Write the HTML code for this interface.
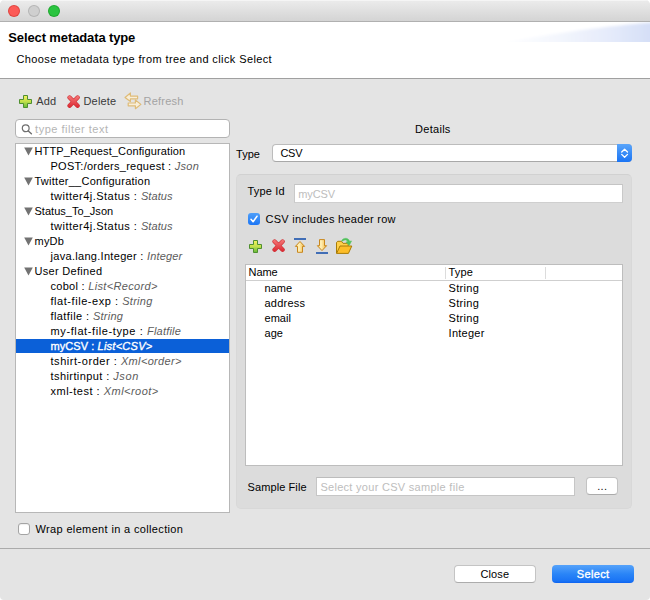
<!DOCTYPE html>
<html><head><meta charset="utf-8">
<style>
*{box-sizing:border-box;margin:0;padding:0}
html,body{width:650px;height:600px;overflow:hidden;background:#fff}
body{font-family:"Liberation Sans","DejaVu Sans",sans-serif;font-size:11px;color:#000;position:relative}
.abs{position:absolute}
#win{position:absolute;left:0;top:0;width:650px;height:600px;background:#e4e4e4;border-radius:5px 5px 4px 4px;overflow:hidden}
#titlebar{left:0;top:0;width:650px;height:22px;background:linear-gradient(#ececec,#d4d4d4);border-bottom:1px solid #b0b0b0;box-shadow:inset 0 1px 0 #f5f5f5}
.tl{position:absolute;top:5px;width:12px;height:12px;border-radius:50%}
#hdr{left:0;top:22px;width:650px;height:56px;background:#fff}
#hdrline{left:0;top:78px;width:650px;height:1px;background:#a0a0a0}
.t{position:absolute;white-space:nowrap;line-height:15px;height:15px}
i{color:#5c5c5c}
.sel i{color:#fff}
.sel,.w{-webkit-text-stroke:0.35px #fff}
.field{position:absolute;background:#fff;border:1px solid #b9b9b9}
</style></head><body>
<div id="win">
<div id="titlebar" class="abs">
 <div class="tl" style="left:8px;background:#fc5b57;border:1px solid rgba(215,60,55,.75)"></div>
 <div class="tl" style="left:28px;background:#cfcfcf;border:1px solid rgba(170,170,170,.7)"></div>
 <div class="tl" style="left:48px;background:#2bc440;border:1px solid rgba(25,160,40,.75)"></div>
</div>
<div id="hdr" class="abs">
 <svg class="abs" style="right:0;top:0;overflow:hidden" width="300" height="20" viewBox="0 0 300 20"><defs><linearGradient id="hg" gradientUnits="userSpaceOnUse" x1="150" x2="300" y1="0" y2="0"><stop offset="0" stop-color="#ffffff"/><stop offset=".4" stop-color="#f3f6fd"/><stop offset=".75" stop-color="#e4eafa"/><stop offset="1" stop-color="#d5dff7"/></linearGradient><filter id="hb" x="-10%" y="-50%" width="120%" height="200%"><feGaussianBlur stdDeviation="1.8"/></filter></defs><path d="M150 21 C 225 8, 270 2.5, 310 0 L310 40 L150 40 Z" fill="url(#hg)" filter="url(#hb)"/></svg>
</div>
<div id="hdrline" class="abs"></div>

<!-- toolbar icons -->
<svg class="abs" style="left:19px;top:95px" width="13" height="13" viewBox="0 0 13 13"><defs><linearGradient id="pg" x1="0" y1="0" x2="0" y2="1"><stop offset="0.05" stop-color="#f2f05c"/><stop offset=".5" stop-color="#c3e04c"/><stop offset="1" stop-color="#62b93a"/></linearGradient></defs><path id="plusp" d="M4.5 .5h4v4h4v4h-4v4h-4v-4h-4v-4h4z" fill="url(#pg)" stroke="#4f8f30" stroke-width="1" stroke-linejoin="round"/></svg>
<svg class="abs" style="left:67px;top:94.5px" width="13.2" height="13.6" viewBox="0 0 13.2 13.6"><defs><linearGradient id="xg" gradientUnits="userSpaceOnUse" x1="0" y1="0" x2="0" y2="13.6"><stop offset="0.1" stop-color="#f47474"/><stop offset="1" stop-color="#d8202c"/></linearGradient></defs><g id="xp"><path d="M2.6 2.5 L10.6 10.7 M10.6 2.5 L2.6 10.7" fill="none" stroke="#cf3136" stroke-width="4.4" stroke-linecap="round"/><path d="M2.6 2.5 L10.6 10.7 M10.6 2.5 L2.6 10.7" fill="none" stroke="url(#xg)" stroke-width="3.2" stroke-linecap="round"/></g></svg>
<svg class="abs" style="left:124px;top:92px" width="18" height="18" viewBox="0 0 18 18"><g fill="#f8eed9" stroke="#dfbc78" stroke-width="1.2" stroke-linejoin="round"><path d="M1 5.5 L6.4 1 L6.4 4.1 L13.6 4.1 L13.6 6.8 L6.4 6.8 L6.4 9.6 Z"/><path d="M16.9 12.4 L11.4 8 L11.4 11 L4.2 11 L4.2 13.8 L11.4 13.8 L11.4 16.7 Z"/></g></svg>

<!-- filter -->
<div class="field" style="left:15px;top:119px;width:215px;height:19px;border-color:#b3b3b3;border-radius:4px"></div>
<svg class="abs" style="left:20px;top:122px" width="14" height="14" viewBox="0 0 14 14"><circle cx="5.7" cy="6.3" r="3.4" fill="none" stroke="#6e6e6e" stroke-width="1.2"/><path d="M8.3 9 L11.4 11.8" stroke="#6e6e6e" stroke-width="1.4" stroke-linecap="round"/></svg>

<!-- tree -->
<div class="field" style="left:15px;top:143px;width:215px;height:370px;border-color:#b7b7b7"></div>
<div class="abs" style="left:16px;top:339px;width:213px;height:14px;background:#0b60d8"></div>
<svg class="abs" style="left:24px;top:146.9px" width="9" height="9" viewBox="0 0 9 9"><path d="M0.2 0.6 L8.8 0.6 L4.5 8.4 Z" fill="#727272"/></svg>
<svg class="abs" style="left:24px;top:176.9px" width="9" height="9" viewBox="0 0 9 9"><path d="M0.2 0.6 L8.8 0.6 L4.5 8.4 Z" fill="#727272"/></svg>
<svg class="abs" style="left:24px;top:206.9px" width="9" height="9" viewBox="0 0 9 9"><path d="M0.2 0.6 L8.8 0.6 L4.5 8.4 Z" fill="#727272"/></svg>
<svg class="abs" style="left:24px;top:236.9px" width="9" height="9" viewBox="0 0 9 9"><path d="M0.2 0.6 L8.8 0.6 L4.5 8.4 Z" fill="#727272"/></svg>
<svg class="abs" style="left:24px;top:266.9px" width="9" height="9" viewBox="0 0 9 9"><path d="M0.2 0.6 L8.8 0.6 L4.5 8.4 Z" fill="#727272"/></svg>

<!-- wrap checkbox -->
<div class="abs" style="left:18px;top:523px;width:12px;height:12px;background:#fff;border:1px solid #a4a4a4;border-radius:3px;box-shadow:inset 0 .5px 1px rgba(0,0,0,.12)"></div>

<!-- combo -->
<div class="abs" style="left:272px;top:144px;width:360px;height:18px;background:#fff;border:1px solid #bcbcbc;border-bottom-color:#a8a8a8;border-radius:4px"></div>
<div class="abs" style="left:617px;top:144px;width:15px;height:18px;background:linear-gradient(#5aa5fa,#1a74f4);border-radius:0 4px 4px 0"></div>
<svg class="abs" style="left:617px;top:144px" width="15" height="18" viewBox="0 0 15 18"><path d="M4.7 8 L7.6 5.2 L10.5 8 M4.7 10.4 L7.6 13.2 L10.5 10.4" fill="none" stroke="#fff" stroke-width="1.3" stroke-linecap="round" stroke-linejoin="round"/></svg>

<!-- group -->
<div class="abs" style="left:236px;top:174px;width:396px;height:335px;background:#dcdcdc;border-radius:5px;border:1px solid #d8d8d8;border-top-color:#d1d1d1"></div>
<div class="field" style="left:294px;top:184px;width:329px;height:19px;border-color:#c4c4c4 #c9c9c9 #cfcfcf"></div>
<!-- checked box -->
<div class="abs" style="left:248px;top:213px;width:12px;height:12px;background:linear-gradient(#4f9ff9,#1c76f5);border-radius:3px"></div>
<svg class="abs" style="left:248px;top:213px" width="12" height="12" viewBox="0 0 12 12"><path d="M3 6.3 L5.1 8.8 L9 3.2" fill="none" stroke="#fff" stroke-width="1.5" stroke-linecap="round" stroke-linejoin="round"/></svg>

<!-- small toolbar -->
<svg class="abs" style="left:249px;top:240px" width="13" height="13" viewBox="0 0 13 13"><use href="#plusp"/></svg>
<svg class="abs" style="left:272px;top:239.4px" width="13.2" height="13.6" viewBox="0 0 13.2 13.6"><use href="#xp"/></svg>
<svg class="abs" style="left:293px;top:237px" width="14" height="17" viewBox="0 0 14 17"><defs><linearGradient id="ag" x1="0" x2="1"><stop offset="0" stop-color="#ffe08a"/><stop offset=".4" stop-color="#fff0b8"/><stop offset="1" stop-color="#f2b53c"/></linearGradient></defs><rect x="1" y="1" width="12" height="2" fill="#416eb6"/><path id="arr" d="M7 4.5 L11.6 9.4 L9.5 9.4 L9.5 15.3 L4.5 15.3 L4.5 9.4 L2.4 9.4 Z" fill="url(#ag)" stroke="#c8861c" stroke-width="1" stroke-linejoin="round"/></svg>
<svg class="abs" style="left:315px;top:237px" width="14" height="17" viewBox="0 0 14 17"><rect x="1" y="15" width="12" height="2" fill="#416eb6"/><path d="M7 13.6 L11.6 8.7 L9.5 8.7 L9.5 2.6 L4.5 2.6 L4.5 8.7 L2.4 8.7 Z" fill="url(#ag)" stroke="#c8861c" stroke-width="1" stroke-linejoin="round"/></svg>
<svg class="abs" style="left:335px;top:237px" width="18" height="17" viewBox="0 0 18 17"><path d="M1.5 16.3 L1.5 5.4 L2.8 4.3 L6.4 4.3 L8 6.3 L13.2 6.3 L13.2 9" fill="#ffd04a" stroke="#a87c08" stroke-width="1" stroke-linejoin="round"/><path d="M1.6 16.4 L5 9 L16.8 9 L13.4 16.4 Z" fill="#fdbd28" stroke="#a87c08" stroke-width="1" stroke-linejoin="round"/><path d="M6.6 3.6 C8.5 0.6 13.2 0.2 14.6 4.2 L16.6 3.9 L14.3 8.4 L10.8 5 L12.7 4.6 C12 2.8 9.4 2.4 7.6 4.2 Z" fill="#4fc25a" stroke="#5ac566" stroke-width=".5"/></svg>

<!-- table -->
<div class="field" style="left:245px;top:264px;width:377.5px;height:202px;border-color:#bdbdbd"></div>
<div class="abs" style="left:246px;top:280px;width:375.5px;height:1px;background:#cfcfcf"></div>
<div class="abs" style="left:445px;top:267px;width:1px;height:12px;background:#dcdcdc"></div>
<div class="abs" style="left:545px;top:267px;width:1px;height:12px;background:#dcdcdc"></div>

<!-- sample file -->
<div class="field" style="left:316px;top:477px;width:259px;height:19px;border-color:#bcbcbc #c6c6c6 #c6c6c6"></div>
<div class="abs" style="left:586px;top:477px;width:32px;height:18px;background:#fff;border:1px solid #c3c3c3;border-bottom-color:#ababab;border-radius:4px"></div>

<div class="abs" style="left:0;top:548px;width:650px;height:1px;background:#ababab"></div>

<!-- buttons -->
<div class="abs" style="left:454px;top:565px;width:82px;height:18px;background:#fff;border:1px solid #c4c4c4;border-bottom-color:#acacac;border-radius:4px"></div>
<div class="abs" style="left:552px;top:565px;width:82px;height:18px;background:linear-gradient(#55a2fa 0%,#2a85f7 50%,#1a74f5 88%,#0d63f0 100%);border-radius:4px"></div>

<div class="t" style="left:8.3px;top:30px;font-size:13px;letter-spacing:-0.12px;font-weight:bold">Select metadata type</div>
<div class="t" style="left:16.5px;top:52px;font-size:11px;letter-spacing:0.39px;">Choose metadata type from tree and click Select</div>
<div class="t" style="left:36.2px;top:94px;font-size:11px;letter-spacing:0.13px;color:#3a3a3a">Add</div>
<div class="t" style="left:83.5px;top:94px;font-size:11px;letter-spacing:0.18px;color:#3a3a3a">Delete</div>
<div class="t" style="left:143.6px;top:94px;font-size:11px;letter-spacing:0.21px;color:#a3a3a3">Refresh</div>
<div class="t" style="left:35.1px;top:122px;font-size:11px;letter-spacing:0.50px;color:#b5b5b5">type filter text</div>
<div class="t" style="left:415.0px;top:122px;font-size:11px;letter-spacing:0.29px;">Details</div>
<div class="t" style="left:236.1px;top:147px;font-size:11px;letter-spacing:-0.02px;">Type</div>
<div class="t" style="left:280.4px;top:146px;font-size:11px;letter-spacing:-0.25px;">CSV</div>
<div class="t" style="left:247.5px;top:184px;font-size:11px;letter-spacing:0.19px;">Type Id</div>
<div class="t" style="left:298.3px;top:187px;font-size:11px;letter-spacing:-0.15px;color:#bdbdbd">myCSV</div>
<div class="t" style="left:265.5px;top:212px;font-size:11px;letter-spacing:0.27px;">CSV includes header row</div>
<div class="t" style="left:248.6px;top:265px;font-size:11px;letter-spacing:-0.13px;">Name</div>
<div class="t" style="left:448.6px;top:265px;font-size:11px;letter-spacing:0.15px;">Type</div>
<div class="t" style="left:264.5px;top:281px;font-size:11px;letter-spacing:0.05px;">name</div>
<div class="t" style="left:448.6px;top:281px;font-size:11px;letter-spacing:0.30px;">String</div>
<div class="t" style="left:264.5px;top:296px;font-size:11px;letter-spacing:0.24px;">address</div>
<div class="t" style="left:448.6px;top:296px;font-size:11px;letter-spacing:0.30px;">String</div>
<div class="t" style="left:264.5px;top:311px;font-size:11px;letter-spacing:0.02px;">email</div>
<div class="t" style="left:448.6px;top:311px;font-size:11px;letter-spacing:0.30px;">String</div>
<div class="t" style="left:264.5px;top:326px;font-size:11px;letter-spacing:0.02px;">age</div>
<div class="t" style="left:448.6px;top:326px;font-size:11px;letter-spacing:0.25px;">Integer</div>
<div class="t" style="left:247.5px;top:480px;font-size:11px;letter-spacing:0.10px;">Sample File</div>
<div class="t" style="left:320.4px;top:480px;font-size:11px;letter-spacing:0.29px;color:#bdbdbd">Select your CSV sample file</div>
<div class="t" style="left:35.5px;top:522px;font-size:11px;letter-spacing:0.35px;">Wrap element in a collection</div>
<div class="t" style="left:480.4px;top:567px;font-size:11px;letter-spacing:0.13px;">Close</div>
<div class="t w" style="left:576.7px;top:567px;font-size:11px;letter-spacing:0.37px;color:#fff">Select</div>
<div class="t" style="left:597.2px;top:479px;font-size:11px;letter-spacing:0.33px;color:#111">...</div>
<div class="t" style="left:34.5px;top:144px;font-size:11px;letter-spacing:0.13px;">HTTP_Request_Configuration</div>
<div class="t" style="left:50.5px;top:159px;font-size:11px;"><span style="letter-spacing:0.27px">POST:/orders_request : </span><i style="letter-spacing:0.30px">Json</i></div>
<div class="t" style="left:34.5px;top:174px;font-size:11px;letter-spacing:0.26px;">Twitter__Configuration</div>
<div class="t" style="left:50.5px;top:189px;font-size:11px;"><span style="letter-spacing:0.48px">twitter4j.Status : </span><i style="letter-spacing:0.09px">Status</i></div>
<div class="t" style="left:34.5px;top:204px;font-size:11px;letter-spacing:0.03px;">Status_To_Json</div>
<div class="t" style="left:50.5px;top:219px;font-size:11px;"><span style="letter-spacing:0.48px">twitter4j.Status : </span><i style="letter-spacing:0.09px">Status</i></div>
<div class="t" style="left:34.5px;top:234px;font-size:11px;letter-spacing:0.22px;">myDb</div>
<div class="t" style="left:50.5px;top:249px;font-size:11px;"><span style="letter-spacing:0.30px">java.lang.Integer : </span><i style="letter-spacing:0.13px">Integer</i></div>
<div class="t" style="left:34.5px;top:264px;font-size:11px;letter-spacing:0.30px;">User Defined</div>
<div class="t" style="left:50.5px;top:279px;font-size:11px;"><span style="letter-spacing:0.29px">cobol : </span><i style="letter-spacing:0.33px">List&lt;Record&gt;</i></div>
<div class="t" style="left:50.5px;top:294px;font-size:11px;"><span style="letter-spacing:0.55px">flat-file-exp : </span><i style="letter-spacing:0.25px">String</i></div>
<div class="t" style="left:50.5px;top:309px;font-size:11px;"><span style="letter-spacing:0.41px">flatfile : </span><i style="letter-spacing:0.26px">String</i></div>
<div class="t" style="left:50.5px;top:324px;font-size:11px;"><span style="letter-spacing:0.61px">my-flat-file-type : </span><i style="letter-spacing:0.19px">Flatfile</i></div>
<div class="t sel" style="left:50.5px;top:339px;font-size:11px;color:#fff"><span style="letter-spacing:0.07px">myCSV : </span><i style="letter-spacing:0.26px">List&lt;CSV&gt;</i></div>
<div class="t" style="left:50.5px;top:354px;font-size:11px;"><span style="letter-spacing:0.54px">tshirt-order : </span><i style="letter-spacing:0.33px">Xml&lt;order&gt;</i></div>
<div class="t" style="left:50.5px;top:369px;font-size:11px;"><span style="letter-spacing:0.42px">tshirtinput : </span><i style="letter-spacing:0.59px">Json</i></div>
<div class="t" style="left:50.5px;top:384px;font-size:11px;"><span style="letter-spacing:0.50px">xml-test : </span><i style="letter-spacing:0.48px">Xml&lt;root&gt;</i></div>
</div>
</body></html>
